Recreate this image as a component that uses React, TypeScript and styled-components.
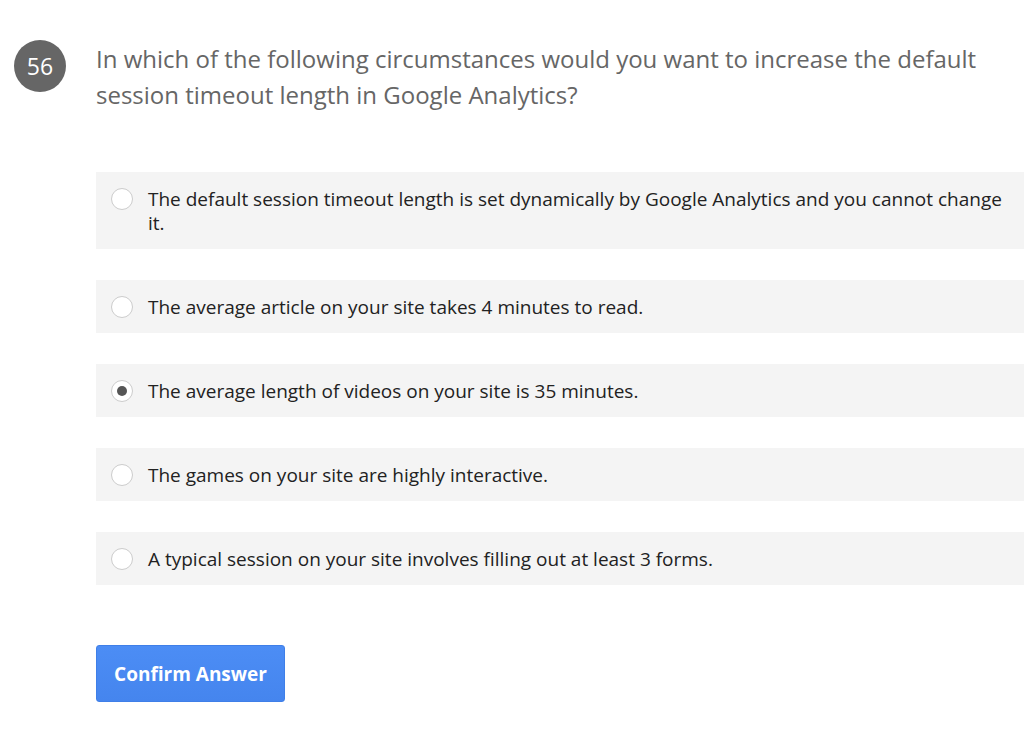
import styled, { createGlobalStyle } from "styled-components"

const GlobalStyle = createGlobalStyle`
  body {
    margin: 0;
    background: #fff;
    font-family: "Open Sans", "Liberation Sans", sans-serif;
  }
`

const Page = styled.div`
  padding: 40px 0 0 14px;
  overflow: hidden;
`

const QuestionRow = styled.div`
  display: flex;
  align-items: flex-start;
  gap: 30px;
`

const Badge = styled.div`
  flex: none;
  width: 52px;
  height: 52px;
  border-radius: 50%;
  background: #666;
  color: #fff;
  font-size: 23px;
  display: flex;
  align-items: center;
  justify-content: center;
`

const QuestionText = styled.h2`
  margin: 1px 0 0;
  font-size: 24px;
  font-weight: 400;
  line-height: 36px;
  color: #666;
  max-width: 900px;
`

const Options = styled.div`
  margin: 59px 0 0 82px;
  display: flex;
  flex-direction: column;
  gap: 31px;
`

const Option = styled.label`
  display: flex;
  align-items: flex-start;
  gap: 15px;
  background: #f4f4f4;
  padding: 15px 16px 14px 15px;
  margin-right: -4px;
  font-size: 19px;
  line-height: 24px;
  color: #222;
  cursor: pointer;
`

const Radio = styled.span<{ $checked?: boolean }>`
  flex: none;
  width: 22px;
  height: 22px;
  margin-top: 1px;
  box-sizing: border-box;
  border-radius: 50%;
  border: 1.5px solid #ccc;
  background: #fff;
  display: flex;
  align-items: center;
  justify-content: center;

  &::after {
    content: "";
    width: 10px;
    height: 10px;
    border-radius: 50%;
    background: ${(p) => (p.$checked ? "#555" : "transparent")};
  }
`

const ConfirmButton = styled.button`
  margin: 60px 0 40px 82px;
  width: 189px;
  height: 57px;
  border: 1px solid #3f7fe8;
  border-radius: 3px;
  background: linear-gradient(#4c8df5, #4585ee);
  color: #fff;
  font-family: "Open Sans", "Liberation Sans", sans-serif;
  font-size: 19px;
  font-weight: 700;
  cursor: pointer;
`

const answers = [
  "The default session timeout length is set dynamically by Google Analytics and you cannot change it.",
  "The average article on your site takes 4 minutes to read.",
  "The average length of videos on your site is 35 minutes.",
  "The games on your site are highly interactive.",
  "A typical session on your site involves filling out at least 3 forms.",
]

export default function App() {
  const selected = 2
  return (
    <>
      <GlobalStyle />
      <Page>
        <QuestionRow>
          <Badge>56</Badge>
          <QuestionText>
            In which of the following circumstances would you want to increase the default
            session timeout length in Google Analytics?
          </QuestionText>
        </QuestionRow>
        <Options>
          {answers.map((a, i) => (
            <Option key={i}>
              <Radio $checked={i === selected} />
              <span>{a}</span>
            </Option>
          ))}
        </Options>
        <ConfirmButton>Confirm Answer</ConfirmButton>
      </Page>
    </>
  )
}
